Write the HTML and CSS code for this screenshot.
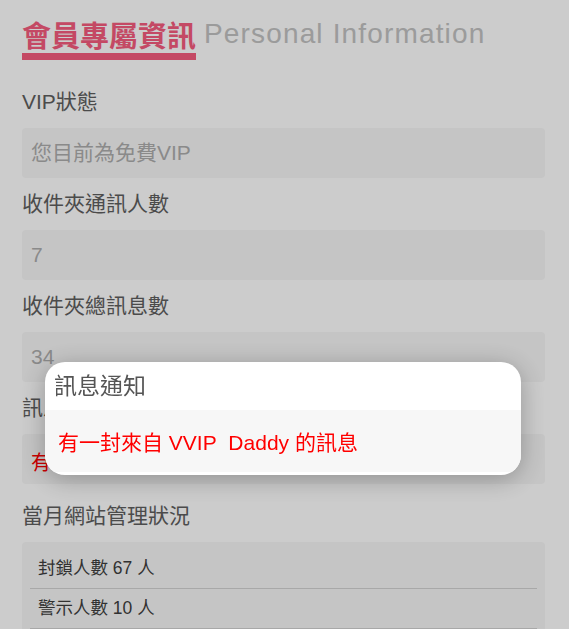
FILE: index.html
```html
<!DOCTYPE html>
<html lang="zh-Hant">
<head>
<meta charset="utf-8">
<title>會員專屬資訊</title>
<link rel="stylesheet" href="styles.css">
</head>
<body>
<main class="page">
  <h1 class="heading">
    <span class="heading-zh">會員專屬資訊</span>
    <span class="heading-en">Personal Information</span>
  </h1>

  <div class="label">VIP狀態</div>
  <div class="field">您目前為免費VIP</div>

  <div class="label">收件夾通訊人數</div>
  <div class="field">7</div>

  <div class="label">收件夾總訊息數</div>
  <div class="field">34</div>

  <div class="label">訊息通知</div>
  <div class="field field-alert">有一封來自 VVIP&nbsp; Daddy 的訊息</div>

  <div class="label label-section">當月網站管理狀況</div>
  <ul class="list">
    <li class="list-row">封鎖人數 67 人</li>
    <li class="list-row">警示人數 10 人</li>
  </ul>
</main>

<div class="overlay"></div>
<div class="modal">
  <div class="modal-title">訊息通知</div>
  <div class="modal-body">有一封來自 VVIP&nbsp; Daddy 的訊息</div>
</div>
</body>
</html>
```

FILE: styles.css
```css
html, body {
  margin: 0;
  padding: 0;
  overflow: hidden;
  height: 100%;
  background: #ffffff;
}

body {
  font-family: "Liberation Sans", "Noto Sans CJK TC", sans-serif;
}

.page {
  padding: 16px 24px 0 22px;
}

.heading {
  margin: 0;
  display: flex;
  align-items: flex-start;
  font-weight: normal;
}

.heading-zh {
  font-size: 29px;
  font-weight: bold;
  line-height: 37px;
  color: #f55c7d;
  border-bottom: 7px solid #f55c7d;
  font-family: "Noto Sans CJK TC", sans-serif;
}

.heading-en {
  font-size: 28px;
  line-height: 35px;
  margin-left: 8px;
  letter-spacing: 1.15px;
  color: #c2c2c2;
}

.label {
  margin-top: 11px;
  font-size: 21px;
  line-height: 30px;
  color: #5e5e5e;
}

.heading + .label {
  margin-top: 27px;
}

.label-section {
  margin-top: 17px;
}

.field {
  margin-top: 11px;
  height: 50px;
  line-height: 50px;
  padding-left: 9px;
  background: #f7f7f7;
  border-radius: 4px;
  font-size: 21px;
  color: #adadad;
}

.field-alert {
  color: #ff0000;
  line-height: 58px;
  font-size: 20px;
}

.list {
  list-style: none;
  margin: 11px 0 0;
  padding: 7px 8px 0;
  background: #f7f7f7;
  border-radius: 4px 4px 0 0;
}

.list-row {
  height: 39px;
  line-height: 39px;
  padding-left: 8px;
  border-bottom: 1px solid #d2d2d2;
  font-size: 17.5px;
  color: #3e3e3e;
}

.overlay {
  position: fixed;
  inset: 0;
  background: rgba(0, 0, 0, 0.2);
}

.modal {
  position: fixed;
  left: 45px;
  top: 362px;
  width: 476px;
  background: #ffffff;
  border-radius: 20px;
  overflow: hidden;
  box-shadow: 0 4px 26px rgba(0, 0, 0, 0.28);
  padding-bottom: 3px;
}

.modal-title {
  height: 48px;
  line-height: 48px;
  padding-left: 9px;
  font-size: 23px;
  color: #555555;
}

.modal-body {
  height: 62px;
  box-sizing: border-box;
  padding: 3px 0 0 13px;
  line-height: 59px;
  background: #f7f7f7;
  font-size: 21px;
  color: #ff0000;
}
```
